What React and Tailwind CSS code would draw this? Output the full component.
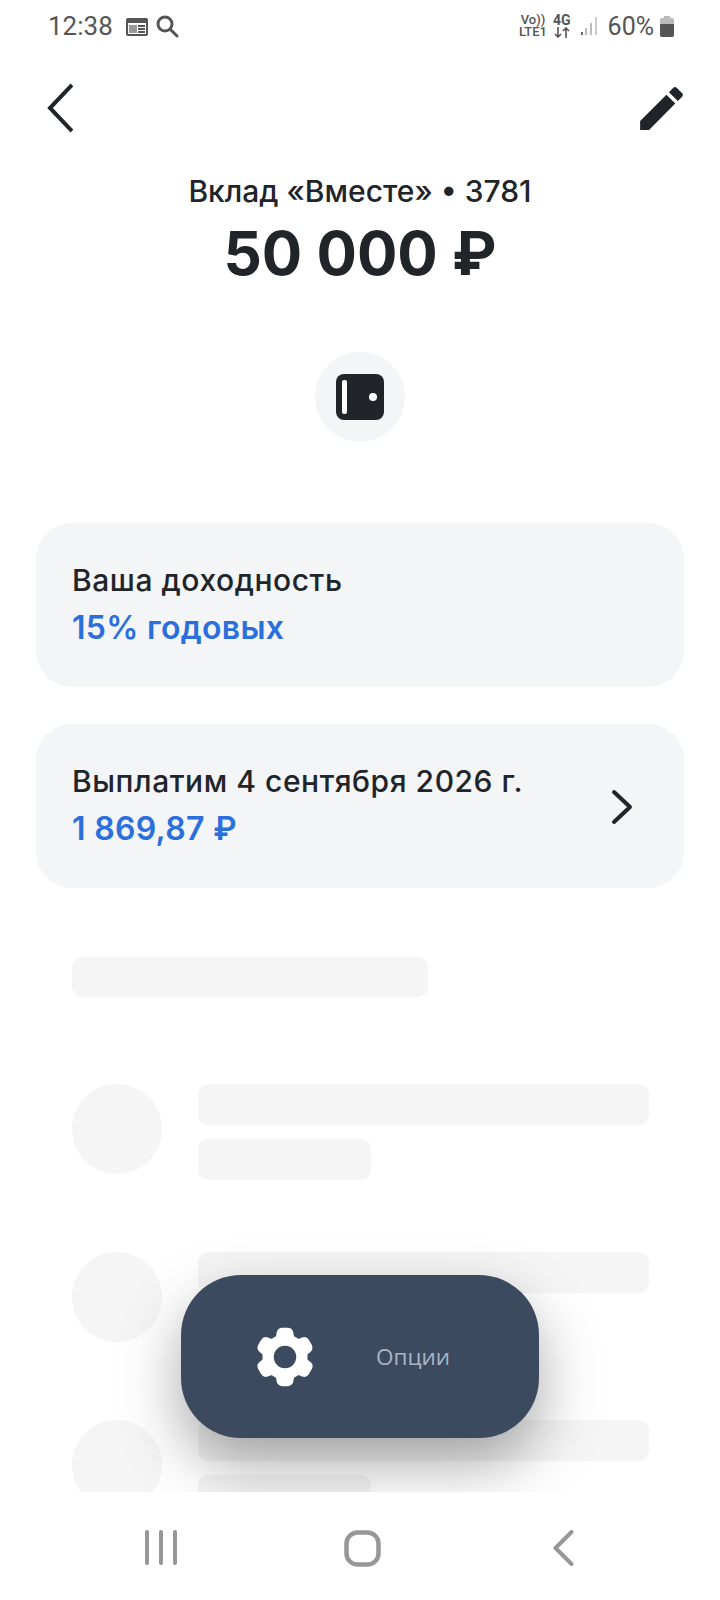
import React from 'react';
import { HiCog6Tooth } from 'react-icons/hi2';

function Pencil() {
  return (
    <svg width="57" height="57" viewBox="0 0 24 24" fill="#212429">
      <path d="M3 17.25V21h3.75L17.81 9.94l-3.75-3.75L3 17.25zM20.71 7.04c.39-.39.39-1.02 0-1.41l-2.34-2.34c-.39-.39-1.02-.39-1.41 0l-1.83 1.83 3.75 3.75 1.83-1.83z" />
    </svg>
  );
}

function StatusBar() {
  return (
    <div className="h-[52px] shrink-0 flex items-center justify-between pl-[48px] pr-[46px] text-[#555] font-['Roboto',sans-serif]">
      <div className="flex items-center">
        <span className="text-[26px] leading-none">12:38</span>
        <svg className="ml-[13px]" width="22" height="19" viewBox="0 0 22 19" fill="none">
          <rect x="1" y="2" width="20" height="16" rx="1" stroke="#555" strokeWidth="2" />
          <rect x="1" y="1" width="20" height="5" fill="#555" />
          <rect x="3" y="8" width="8" height="8" fill="#999" />
          <rect x="12" y="8" width="7" height="2" fill="#555" />
          <rect x="12" y="11" width="7" height="2" fill="#555" />
          <rect x="12" y="14" width="7" height="2" fill="#555" />
        </svg>
        <svg className="ml-[7px]" width="24" height="24" viewBox="0 0 24 24" fill="none" stroke="#555" strokeWidth="3" strokeLinecap="round">
          <circle cx="10" cy="10" r="7" />
          <path d="M15.5 15.5L22 22" />
        </svg>
      </div>
      <div className="flex items-center">
        <div className="flex flex-col items-center text-[13px] leading-[12px] font-medium">
          <span>Vo))</span>
          <span>LTE1</span>
        </div>
        <div className="ml-[6px] flex flex-col items-center">
          <span className="text-[14px] leading-[13px] font-bold">4G</span>
          <svg width="16" height="11" viewBox="0 0 16 11" fill="none" stroke="#555" strokeWidth="1.6">
            <path d="M4 0v10M1 7l3 3 3-3M12 11V1M9 4l3-3 3 3" />
          </svg>
        </div>
        <svg className="ml-[9px]" width="18" height="20" viewBox="0 0 18 20">
          <rect x="1" y="16" width="2" height="3" fill="#666" />
          <rect x="5" y="12" width="2" height="7" fill="#bbb" />
          <rect x="10" y="7" width="2" height="12" fill="#bbb" />
          <rect x="15" y="1" width="2" height="18" fill="#ccc" />
        </svg>
        <span className="ml-[10px] text-[25px] leading-none">60%</span>
        <svg className="ml-[6px]" width="14" height="21" viewBox="0 0 14 21">
          <path d="M4 0h6v2h2a2 2 0 0 1 2 2v15a2 2 0 0 1-2 2H2a2 2 0 0 1-2-2V4a2 2 0 0 1 2-2h2z" fill="#bbb" />
          <path d="M0 8h14v11a2 2 0 0 1-2 2H2a2 2 0 0 1-2-2z" fill="#555" />
        </svg>
      </div>
    </div>
  );
}

function InfoCard({ title, value, arrow }) {
  return (
    <div className="h-[164px] rounded-[36px] bg-[#f3f5f7] pl-[36px] pr-[50px] pb-[2px] flex items-center justify-between">
      <div>
        <div className="text-[30px] leading-[40px] font-medium tracking-[0.55px] text-[#212429]">{title}</div>
        <div className="mt-[8px] text-[32px] leading-[40px] font-semibold tracking-[0.3px] text-[#2b6fdc]">{value}</div>
      </div>
      {arrow && (
        <svg className="mt-[4px]" width="24" height="36" viewBox="0 0 24 36" fill="none" stroke="#212429" strokeWidth="4" strokeLinecap="round" strokeLinejoin="round">
          <path d="M4 3l16 15L4 33" />
        </svg>
      )}
    </div>
  );
}

function SkeletonRow() {
  return (
    <div className="flex gap-[36px] h-[168px]">
      <div className="w-[90px] h-[90px] rounded-full bg-[#f5f5f5] shrink-0" />
      <div className="flex-1 flex flex-col gap-[14px]">
        <div className="h-[41px] rounded-[10px] bg-[#f5f5f5]" />
        <div className="h-[41px] w-[173px] rounded-[10px] bg-[#f5f5f5]" />
      </div>
    </div>
  );
}

function NavBar() {
  return (
    <div className="h-[108px] shrink-0 bg-white flex items-start pt-[38px] pl-[145px]">
      <svg width="32" height="36" viewBox="0 0 32 36" fill="#979797">
        <rect x="0" y="0" width="4" height="35" rx="2" />
        <rect x="14" y="0" width="4" height="35" rx="2" />
        <rect x="28" y="0" width="4" height="35" rx="2" />
      </svg>
      <svg className="ml-[167px]" width="37" height="37" viewBox="0 0 37 37" fill="none" stroke="#979797" strokeWidth="4.5">
        <rect x="2.5" y="2.5" width="32" height="32" rx="11" />
      </svg>
      <svg className="ml-[172px]" width="21" height="36" viewBox="0 0 21 36" fill="none" stroke="#979797" strokeWidth="4" strokeLinecap="round" strokeLinejoin="round">
        <path d="M18.5 2L2.5 18l16 16" />
      </svg>
    </div>
  );
}

export default function App() {
  return (
    <div className="w-[720px] h-[1600px] bg-white flex flex-col overflow-hidden font-['Inter',sans-serif]">
      <StatusBar />
      <div className="relative flex-1 overflow-hidden">
        <div className="flex items-center justify-between pl-[47px] pr-[30px] h-[76px] mt-[18px]">
          <svg width="26" height="50" viewBox="0 0 26 50" fill="none" stroke="#212429" strokeWidth="4" strokeLinejoin="miter">
            <path d="M25 2L3 25l22 23" />
          </svg>
          <Pencil />
        </div>
        <div className="mt-[25px] text-center text-[#212429]">
          <div className="text-[30px] leading-[40px] font-medium">Вклад «Вместе» • 3781</div>
          <div className="mt-[4px] text-[60px] leading-[76px] font-bold">50 000 ₽</div>
        </div>
        <div className="mt-[61px] mx-auto w-[90px] h-[90px] rounded-full bg-[#f3f5f7] flex items-center justify-center">
          <svg width="48" height="46" viewBox="0 0 48 46">
            <rect width="48" height="46" rx="8" fill="#212429" />
            <rect x="6" y="6" width="5" height="34" rx="2" fill="#fff" />
            <circle cx="37" cy="23" r="4" fill="#fff" />
          </svg>
        </div>
        <div className="mt-[81px] px-[36px] flex flex-col gap-[37px]">
          <InfoCard title="Ваша доходность" value="15% годовых" />
          <InfoCard title="Выплатим 4 сентября 2026 г." value="1 869,87 ₽" arrow />
        </div>
        <div className="mt-[69px] pl-[72px] pr-[71px]">
          <div className="h-[40px] w-[356px] rounded-[10px] bg-[#f5f5f5]" />
          <div className="mt-[87px]">
            <SkeletonRow />
            <SkeletonRow />
            <SkeletonRow />
          </div>
        </div>
        <div className="absolute left-[181px] top-[1223px] w-[358px] h-[163px] rounded-[60px] bg-[#3b4a5f] shadow-[0_26px_60px_rgba(0,0,0,0.34)] flex items-center pl-[68px]">
          <HiCog6Tooth size={72} color="#fff" />
          <span className="ml-[55px] text-[22.5px] text-[#a9b4c4] font-['Open_Sans',sans-serif]">Опции</span>
        </div>
      </div>
      <NavBar />
    </div>
  );
}
